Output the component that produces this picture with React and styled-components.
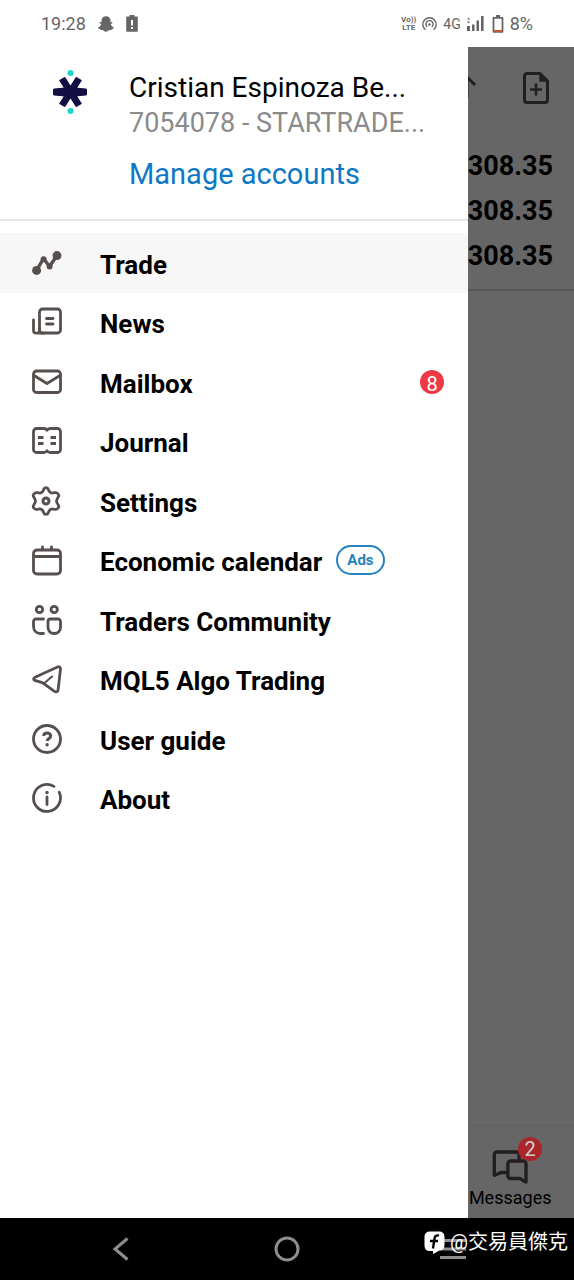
import React from "react";
import styled, { css, createGlobalStyle } from "styled-components";

const GlobalStyle = createGlobalStyle`
  * {
    box-sizing: border-box;
  }

  body {
    margin: 0;
    background: #fff;
    color: #000;
    font-family: Roboto, "Noto Sans CJK TC", sans-serif;
  }

  button {
    padding: 0;
    border: 0;
    background: none;
    color: inherit;
    font: inherit;
    cursor: pointer;
  }

  svg {
    display: block;
    flex: none;
    overflow: visible;
  }
`;

const Screen = styled.div`
  display: flex;
  flex-direction: column;
  min-height: 100vh;
`;

/* status bar */

const StatusBar = styled.header`
  display: flex;
  align-items: center;
  justify-content: space-between;
  height: 47px;
  padding: 0 41px;
  color: #666;
  font-size: 18px;
  line-height: 20px;
`;

const StatusGroup = styled.div`
  display: flex;
  align-items: center;
  gap: ${props => props.$gap}px;
`;

const NetworkType = styled.span`
  font-size: 14px;
`;

const VoLte = styled.span`
  display: flex;
  flex-direction: column;
  align-items: center;
  font-size: 8px;
  font-weight: 700;
  line-height: 8px;
`;

/* trade page under the drawer */

const Stage = styled.div`
  position: relative;
  display: flex;
  flex: 1;
`;

const TradePage = styled.main`
  display: flex;
  flex: 1;
  flex-direction: column;
`;

const Toolbar = styled.div`
  display: flex;
  align-items: center;
  justify-content: flex-end;
  gap: 47px;
  height: 82px;
  padding: 0 25px;
  color: #544e4e;
`;

const Balances = styled.ul`
  margin: 0;
  padding: 15px 21px 10px;
  border-bottom: 2px solid #d8d8d8;
  list-style: none;
`;

const Balance = styled.li`
  font-size: 27px;
  font-weight: 700;
  line-height: 45px;
  text-align: right;
`;

const Tabs = styled.nav`
  display: flex;
  justify-content: flex-end;
  margin-top: auto;
  padding: 0 8px;
  height: 93px;
  border-top: 1px solid #eee;
`;

const Tab = styled.button`
  display: flex;
  flex-direction: column;
  align-items: center;
  justify-content: flex-end;
  gap: 4px;
  width: 20%;
  && {
    padding-bottom: 10px;
    font-size: 18px;
    line-height: 20px;
  }
`;

const TabIcon = styled.span`
  position: relative;
  color: #544e4e;
`;

const Scrim = styled.div`
  position: absolute;
  inset: 0;
  z-index: 1;
  background: rgba(0, 0, 0, 0.6);
`;

const Badge = styled.span`
  display: flex;
  align-items: center;
  justify-content: center;
  width: 24px;
  height: 24px;
  padding-top: 4px;
  border-radius: 50%;
  background: #ee3a46;
  color: #fff;
  font-size: 20px;
  line-height: 20px;

  ${props =>
    props.$floating &&
    css`
      position: absolute;
      top: -13px;
      right: -14px;
      z-index: 2;
      padding-top: 0;
      background: #ab2629;
      color: #d0d0d0;
    `};
`;

/* drawer */

const Drawer = styled.aside`
  position: absolute;
  top: 0;
  bottom: 0;
  left: 0;
  z-index: 3;
  width: 468px;
  max-width: 82%;
  background: #fff;
`;

const Account = styled.section`
  display: flex;
  gap: 42px;
  padding: 23px 44px 26px 53px;
  border-bottom: 2px solid #e8e8e8;
`;

const AccountInfo = styled.div`
  display: flex;
  flex-direction: column;
  align-items: flex-start;
  min-width: 0;
  white-space: nowrap;
`;

const AccountName = styled.span`
  font-size: 28px;
  line-height: 36px;
`;

const AccountNumber = styled.span`
  color: #8b8b8b;
  font-size: 27px;
  line-height: 34px;
`;

const ManageLink = styled.a`
  margin-top: 16px;
  margin-bottom: 1px;
  color: #0f78c4;
  font-size: 29px;
  line-height: 36px;
  text-decoration: none;
`;

const Menu = styled.ul`
  display: grid;
  grid-auto-rows: 1fr;
  min-height: 595px;
  margin: 12px 0 0;
  padding: 0;
  list-style: none;
`;

const MenuItem = styled.li`
  display: flex;
  background: ${props => (props.$active ? "#f7f7f7" : "none")};
`;

const MenuButton = styled.button`
  display: flex;
  flex: 1;
  align-items: center;
  text-align: left;
  && {
    padding: 0 24px 0 32px;
  }
`;

const MenuIcon = styled.svg.attrs({
  width: 30,
  height: 30,
  viewBox: "0 0 30 30",
  fill: "none",
  stroke: "currentColor",
  strokeWidth: 2.8,
  strokeLinecap: "round",
  strokeLinejoin: "round"
})`
  color: #564f4d;
`;

const MenuLabel = styled.span`
  margin: 0 14px 0 38px;
  padding-top: 4px;
  font-size: 26px;
  font-weight: 700;
  line-height: 32px;
`;

const Spacer = styled.span`
  flex: 1;
`;

const Ads = styled.span`
  padding: 0 9px;
  border: 2px solid #2583bf;
  border-radius: 15px;
  color: #2583bf;
  font-size: 15px;
  font-weight: 700;
  line-height: 26px;
`;

/* system navigation */

const SystemNav = styled.nav`
  position: relative;
  display: grid;
  grid-template-columns: repeat(3, 1fr);
  height: 62px;
  padding: 0 38px;
  background: #000;
  color: #8e8e8e;
`;

const NavButton = styled.button`
  display: flex;
  align-items: center;
  justify-content: center;
`;

const Watermark = styled.div`
  position: absolute;
  top: 9px;
  right: 6px;
  display: flex;
  align-items: center;
  gap: 5px;
  color: #fff;
  font-size: 20px;
  line-height: 30px;
`;

const menu = [
  {
    label: "Trade",
    active: true,
    icon: (
      <>
        <path d="M4.500 22.500 11.500 10.500l6 8L25 7.500" strokeWidth="3.400" />
        <g fill="currentColor" stroke="none">
          <circle cx="4.600" cy="22.400" r="4.500" />
          <circle cx="11.600" cy="11.200" r="3" />
          <circle cx="17.600" cy="18.400" r="3" />
          <circle cx="25" cy="7.600" r="4.500" />
        </g>
      </>
    )
  },
  {
    label: "News",
    icon: (
      <>
        <rect x="7.500" y="2" width="21" height="24" rx="3" />
        <path d="M1.500 13V23.500a2.600 2.600 0 0 0 2.600 2.600h8M7.500 21.500v2a2.600 2.600 0 0 1-3 2.600" />
        <path d="M14.500 11.500h6.500M14.500 17h6.500" />
      </>
    )
  },
  {
    label: "Mailbox",
    count: 8,
    icon: (
      <>
        <rect x="1.500" y="4" width="27" height="21.500" rx="3" />
        <path d="M2 8.500 15 16.500 28 8.500" />
      </>
    )
  },
  {
    label: "Journal",
    icon: (
      <>
        <path d="M15 4.300c-1-1.500-2-1.800-3.500-1.800H4.500a3 3 0 0 0-3 3v18a3 3 0 0 0 3 3h7c1.500 0 2.500-.4 3.500-1.800 1 1.400 2 1.800 3.500 1.800h7a3 3 0 0 0 3-3V5.500a3 3 0 0 0-3-3h-7c-1.500 0-2.500.3-3.500 1.800z" />
        <path
          d="M6 11.500h5.500M6 17.500h5.500M18.500 11.500H24M18.500 17.500H24"
          strokeLinecap="butt"
        />
      </>
    )
  },
  {
    label: "Settings",
    icon: (
      <>
        <path d="M11.800 3.200C12.300 1.200 15.700 1.200 16.200 3.200 17 6.500 19.200 7.700 22.400 6.700 24.700 6 27.500 8.300 26.600 10.300 25.800 12 24.500 13.400 24.500 15S25.800 18 26.600 19.700C27.500 21.700 24.700 24 22.400 23.300 19.200 22.300 17 23.500 16.200 26.800 15.700 28.800 12.300 28.800 11.800 26.800 11 23.500 8.800 22.300 5.600 23.300 3.300 24 .5 21.700 1.400 19.700 2.200 18 3.500 16.600 3.500 15S2.200 12 1.400 10.300C.5 8.300 3.300 6 5.600 6.700 8.800 7.700 11 6.500 11.800 3.200z" />
        <circle cx="14" cy="15" r="3" strokeWidth="3" />
      </>
    )
  },
  {
    label: "Economic calendar",
    ads: true,
    icon: (
      <>
        <rect x="1.500" y="5" width="27" height="24" rx="3.500" />
        <path d="M2 11.500h26M10.500 2v2M19.500 2v2" />
      </>
    )
  },
  {
    label: "Traders Community",
    icon: (
      <>
        <circle cx="7.500" cy="4.500" r="3.200" />
        <circle cx="22.200" cy="4.500" r="3.200" />
        <path d="M11.500 14H4a2.500 2.500 0 0 0-2.500 2.500V21c0 4.500 3 7.500 7 7.500h3M18.500 14h7.500a2.500 2.500 0 0 1 2.500 2.500V22c0 4-2.500 6.500-6.300 6.500S16 26 16 22v-5.500A2.500 2.500 0 0 1 18.500 14z" />
      </>
    )
  },
  {
    label: "MQL5 Algo Trading",
    icon: (
      <>
        <path d="M3 13.200 25.500 3c1.900-.7 3.200.2 3 2.200l-2.400 20.600c-.2 2-2 2.700-3.600 1.600l-9.300-6.700c-1.200-.9-1.500-1.500-3-2.100L2.800 16.400c-1.700-.8-1.600-2.400.2-3.200z" />
        <path d="M12.500 19 20 12.500" strokeWidth="2" />
      </>
    )
  },
  {
    label: "User guide",
    icon: (
      <>
        <circle cx="15" cy="15" r="13.500" />
        <path
          d="M11.500 11.900c.3-2 1.700-3 3.600-3s3.600 1.100 3.600 3c0 2.500-3.500 2.600-3.500 5.200"
          strokeWidth="3"
          strokeLinecap="butt"
        />
        <circle cx="15.100" cy="20.800" r="1.700" fill="currentColor" stroke="none" />
      </>
    )
  },
  {
    label: "About",
    icon: (
      <>
        <path d="M22 3.400A13.500 13.500 0 1 0 27.200 9.200" />
        <path d="M15 14v7.500" />
        <circle cx="15" cy="9.500" r="1.700" fill="currentColor" stroke="none" />
      </>
    )
  }
];

function Status() {
  return (
    <StatusBar>
      <StatusGroup $gap={12}>
        <span>19:28</span>
        <svg width="16" height="16" viewBox="0 0 16 16" fill="currentColor">
          <path d="M8 .3c2.900 0 4.500 1.900 4.500 4.400v1.500l1.400-.1c.8.300.7 1.100-.1 1.500l-1 .5c.3 1.500 1.300 2.800 2.900 3.500.5.400 0 1.200-1.700 1.500l-.4 1c-.8.200-1.800-.2-2.600.2-.9.600-1.700 1.400-3 1.400s-2.100-.8-3-1.400c-.8-.4-1.800 0-2.600-.2l-.4-1C.3 12.800-.2 12 .3 11.600c1.600-.7 2.600-2 2.900-3.500l-1-.5c-.8-.4-.9-1.200-.1-1.500l1.400.1V4.700C3.500 2.200 5.100.3 8 .3z" />
        </svg>
        <svg width="12" height="17" viewBox="0 0 12 17" fill="currentColor">
          <path
            fillRule="evenodd"
            d="M3.500 0h5v1.500H11q.8 0 .8.800V16q0 .8-.8.800H1q-.8 0-.8-.8V2.300q0-.8.800-.8h2.500zM5 5v5.500h2V5zm0 7v2h2v-2z"
          />
        </svg>
      </StatusGroup>
      <StatusGroup $gap={6}>
        <VoLte>
          <span>Vo))</span>
          <span>LTE</span>
        </VoLte>
        <svg
          width="15"
          height="14"
          viewBox="0 0 15 14"
          fill="none"
          stroke="currentColor"
          strokeWidth="1.400"
        >
          <path d="M3.500 12.800a6.700 6.700 0 1 1 8 0M5.200 10a3.600 3.600 0 1 1 4.600 0" />
          <circle cx="7.500" cy="7.500" r="1.300" fill="currentColor" stroke="none" />
        </svg>
        <NetworkType>4G</NetworkType>
        <svg width="17" height="15" viewBox="0 0 17 15" fill="currentColor">
          <path d="M0 3.500 1.500 1.500 3 3.500zM0 5.500h3L1.500 7.500zM0 10h3v5H0zM5 8.500h2.500V15H5zM9.500 4.500H12V15H9.500zM14 0h2.600v15H14z" />
        </svg>
        <svg width="14" height="18" viewBox="0 0 14 18" fill="none">
          <path
            d="M3.500 2.800h9v14h-9z"
            stroke="currentColor"
            strokeWidth="1.800"
            strokeLinejoin="round"
          />
          <path d="M6 0h4v2.500H6z" fill="currentColor" />
          <path d="M3.500 15h9v2h-9z" fill="#c4583f" />
        </svg>
        <span>8%</span>
      </StatusGroup>
    </StatusBar>
  );
}

function Trade() {
  return (
    <TradePage>
      <Toolbar>
        <svg
          width="22"
          height="26"
          viewBox="0 0 22 26"
          fill="none"
          stroke="currentColor"
          strokeWidth="3"
        >
          <path d="M5 10l8-8 8 8M13 2v21" />
        </svg>
        <svg
          width="26"
          height="32"
          viewBox="0 0 26 32"
          fill="none"
          stroke="currentColor"
          strokeWidth="3"
          strokeLinejoin="round"
        >
          <path d="M4 1.500h13L24.500 9v19a2.500 2.500 0 0 1-2.500 2.500H4A2.500 2.500 0 0 1 1.500 28V4A2.500 2.500 0 0 1 4 1.500z" />
          <path d="M17 1.500V9h7.500z" fill="currentColor" strokeWidth="1.500" />
          <path d="M13 11.500v12M7 17.500h12" strokeWidth="2.600" />
        </svg>
      </Toolbar>
      <Balances>
        <Balance>308.35</Balance>
        <Balance>308.35</Balance>
        <Balance>308.35</Balance>
      </Balances>
      <Tabs>
        <Tab type="button">
          <TabIcon>
            <svg
              width="36"
              height="34"
              viewBox="0 0 36 34"
              fill="none"
              stroke="currentColor"
              strokeWidth="3.400"
              strokeLinejoin="round"
            >
              <path d="M15.500 22.500H9.500c-2 0-3 1.500-7.200 2.800V4.600A2.600 2.600 0 0 1 5 2h19.500a2.600 2.600 0 0 1 2.600 2.600V10" />
              <path d="M18.500 11h12.700A2.600 2.600 0 0 1 34 13.600V32c-3 0-4-3.500-6.500-3.500h-9a2.600 2.600 0 0 1-2.600-2.600V13.600A2.600 2.600 0 0 1 18.500 11z" />
            </svg>
            <Badge $floating>2</Badge>
          </TabIcon>
          Messages
        </Tab>
      </Tabs>
    </TradePage>
  );
}

function Logo() {
  return (
    <svg width="34" height="44" viewBox="0 0 34 44">
      <path
        d="M1 18.500 12 17.500h10l11 1q1 .2 1 1.200v4.600q0 1-1 1.200l-11 1H12l-11-1q-1-.2-1-1.200v-4.600q0-1 1-1.200z"
        fill="#130f45"
      />
      <path
        d="M9 8.500 26 35.500M26 8.500 9 35.500"
        stroke="#130f45"
        strokeWidth="7"
      />
      <g fill="#1fd3ca">
        <circle cx="17.500" cy="3" r="3" />
        <circle cx="17.500" cy="41" r="3" />
      </g>
    </svg>
  );
}

function App() {
  return (
    <React.Fragment>
      <GlobalStyle />
      <Screen>
        <Status />
        <Stage>
          <Trade />
          <Scrim />
          <Drawer>
            <Account>
              <Logo />
              <AccountInfo>
                <AccountName>Cristian Espinoza Be...</AccountName>
                <AccountNumber>7054078 - STARTRADE...</AccountNumber>
                <ManageLink href="#accounts">Manage accounts</ManageLink>
              </AccountInfo>
            </Account>
            <Menu>
              {menu.map(item => (
                <MenuItem key={item.label} $active={item.active}>
                  <MenuButton type="button">
                    <MenuIcon>{item.icon}</MenuIcon>
                    <MenuLabel>{item.label}</MenuLabel>
                    {item.ads && <Ads>Ads</Ads>}
                    <Spacer />
                    {item.count && <Badge>{item.count}</Badge>}
                  </MenuButton>
                </MenuItem>
              ))}
            </Menu>
          </Drawer>
        </Stage>
        <SystemNav>
          <NavButton type="button" aria-label="Back">
            <svg
              width="16"
              height="24"
              viewBox="0 0 16 24"
              fill="none"
              stroke="currentColor"
              strokeWidth="3"
            >
              <path d="M14.500 1.500 2 12l12.500 10.500" />
            </svg>
          </NavButton>
          <NavButton type="button" aria-label="Home">
            <svg
              width="26"
              height="26"
              viewBox="0 0 26 26"
              fill="none"
              stroke="currentColor"
              strokeWidth="3"
            >
              <circle cx="13" cy="13" r="11" />
            </svg>
          </NavButton>
          <NavButton type="button" aria-label="Recent apps">
            <svg width="26" height="20" viewBox="0 0 26 20" fill="currentColor">
              <path d="M0 0h26v3H0zM0 8.500h26v3H0zM0 17h26v3H0z" />
            </svg>
          </NavButton>
          <Watermark>
            <svg width="21" height="23" viewBox="0 0 21 23">
              <path
                d="M6 .5h9Q20.500.5 20.500 6v8q0 5-5 5.500L9 23v-3H6q-5.500 0-5.500-5.500V6Q.5.500 6 .5z"
                fill="#fff"
              />
              <path
                d="M15 4.500c-3-.6-4.300.8-4.600 3.500L9 17.500M6 10h8"
                fill="none"
                stroke="#000"
                strokeWidth="2.400"
              />
            </svg>
            <span>@交易員傑克</span>
          </Watermark>
        </SystemNav>
      </Screen>
    </React.Fragment>
  );
}

export default App;
